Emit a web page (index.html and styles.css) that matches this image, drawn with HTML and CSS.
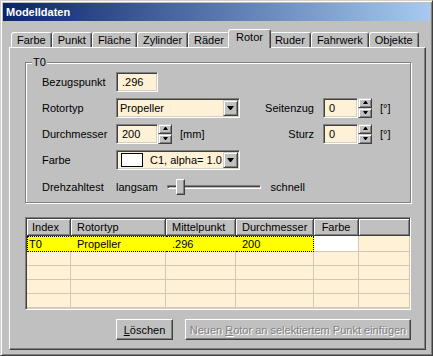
FILE: index.html
```html
<!DOCTYPE html>
<html lang="de">
<head>
    <meta charset="UTF-8">
    <meta name="viewport" content="width=device-width, initial-scale=1.0">
    <title>Modelldaten</title>
    <link rel="stylesheet" href="styles.css">
</head>
<body>
    <div class="window">
        <div class="titlebar">Modelldaten</div>

        <div class="content">
            <div class="tabs">
                <div class="tab">Farbe</div>
                <div class="tab">Punkt</div>
                <div class="tab">Fläche</div>
                <div class="tab">Zylinder</div>
                <div class="tab">Räder</div>
                <div class="tab active">Rotor</div>
                <div class="tab">Ruder</div>
                <div class="tab">Fahrwerk</div>
                <div class="tab">Objekte</div>
            </div>

            <div class="panel">
                <fieldset class="group">
                    <legend>T0</legend>
                    <div class="group-body">
                        <div class="row">
                            <span class="lbl">Bezugspunkt</span>
                            <div class="ctl">
                                <div class="edit edit-mid">.296</div>
                            </div>
                        </div>

                        <div class="row">
                            <span class="lbl">Rotortyp</span>
                            <div class="ctl">
                                <div class="select">
                                    <span class="select-value">Propeller</span>
                                    <span class="select-btn"><i class="arrow-down"></i></span>
                                </div>
                            </div>
                            <span class="side-lbl">Seitenzug</span>
                            <div class="edit edit-small">0</div>
                            <div class="spin">
                                <span class="spin-btn"><i class="arrow-up"></i></span>
                                <span class="spin-btn"><i class="arrow-dn"></i></span>
                            </div>
                            <span class="unit">[°]</span>
                        </div>

                        <div class="row">
                            <span class="lbl">Durchmesser</span>
                            <div class="ctl">
                                <div class="edit edit-mid">200</div>
                                <div class="spin">
                                    <span class="spin-btn"><i class="arrow-up"></i></span>
                                    <span class="spin-btn"><i class="arrow-dn"></i></span>
                                </div>
                                <span class="unit">[mm]</span>
                            </div>
                            <span class="side-lbl">Sturz</span>
                            <div class="edit edit-small">0</div>
                            <div class="spin">
                                <span class="spin-btn"><i class="arrow-up"></i></span>
                                <span class="spin-btn"><i class="arrow-dn"></i></span>
                            </div>
                            <span class="unit">[°]</span>
                        </div>

                        <div class="row">
                            <span class="lbl">Farbe</span>
                            <div class="ctl">
                                <div class="select">
                                    <span class="swatch"></span>
                                    <span class="select-value">C1, alpha= 1.0</span>
                                    <span class="select-btn"><i class="arrow-down"></i></span>
                                </div>
                            </div>
                        </div>

                        <div class="row row-last">
                            <span class="lbl">Drehzahltest</span>
                            <span class="speed">langsam</span>
                            <div class="slider">
                                <span class="track"></span>
                                <span class="thumb"></span>
                            </div>
                            <span class="speed">schnell</span>
                        </div>
                    </div>
                </fieldset>

                <div class="table-wrap">
                    <table class="grid">
                        <colgroup>
                            <col class="c-index">
                            <col class="c-typ">
                            <col class="c-mitte">
                            <col class="c-durch">
                            <col class="c-farbe">
                            <col>
                        </colgroup>
                        <thead>
                            <tr>
                                <th>Index</th>
                                <th>Rotortyp</th>
                                <th>Mittelpunkt</th>
                                <th>Durchmesser</th>
                                <th class="center">Farbe</th>
                                <th></th>
                            </tr>
                        </thead>
                        <tbody>
                            <tr class="first">
                                <td class="sel sel-l">T0</td>
                                <td class="sel">Propeller</td>
                                <td class="sel">.296</td>
                                <td class="sel sel-r">200</td>
                                <td class="white"></td>
                                <td></td>
                            </tr>
                            <tr><td></td><td></td><td></td><td></td><td></td><td></td></tr>
                            <tr><td></td><td></td><td></td><td></td><td></td><td></td></tr>
                            <tr><td></td><td></td><td></td><td></td><td></td><td></td></tr>
                            <tr><td></td><td></td><td></td><td></td><td></td><td></td></tr>
                        </tbody>
                    </table>
                </div>

                <div class="actions">
                    <button class="btn btn-delete"><u>L</u>öschen</button>
                    <button class="btn btn-add" disabled>Neuen <u>R</u>otor an selektiertem Punkt einfügen</button>
                </div>
            </div>
        </div>
    </div>
</body>
</html>
```

FILE: styles.css
```css
body {
    margin: 0;
    font-family: "Liberation Sans", Arial, sans-serif;
    font-size: 11px;
    color: #000;
    background-color: #c0c0c0;
}
.window {
    width: 433px;
    height: 356px;
    box-sizing: border-box;
    padding: 2px;
    background-color: #c0c0c0;
    border: 1px solid;
    border-color: #d4d0c8 #404040 #404040 #d4d0c8;
    box-shadow: inset 1px 1px #fff, inset -1px -1px #808080;
}
.titlebar {
    height: 18px;
    line-height: 18px;
    padding-left: 3px;
    color: #fff;
    font-weight: bold;
    background: linear-gradient(to right, #0a246a, #a6caf0);
}
.content {
    padding: 8px 4px 0 6px;
}

/* tabs */
.tabs {
    display: flex;
    align-items: flex-end;
    height: 18px;
    padding-left: 2px;
    position: relative;
    z-index: 1;
}
.tab {
    height: 14px;
    line-height: 14px;
    padding: 0 5px;
    border: 1px solid;
    border-bottom: none;
    border-color: #fff #404040 transparent #fff;
    box-shadow: inset -1px 0 #808080;
    border-radius: 3px 3px 0 0;
    background-color: #c0c0c0;
}
.tab.active {
    padding: 0 7px 4px;
    margin: 0 -2px -1px;
    position: relative;
}
.panel {
    height: 303px;
    box-sizing: border-box;
    padding: 0 14px 0 15px;
    border: 1px solid;
    border-color: #fff #404040 #404040 #fff;
    box-shadow: inset -1px -1px #808080;
}

/* group box */
.group {
    margin: 8px 0 0;
    padding: 0;
    border: 1px solid #808080;
    box-shadow: inset 1px 1px #fff, 1px 1px #fff;
}
.group legend {
    margin-left: 6px;
    padding: 0 1px;
    line-height: 13px;
    background-color: #c0c0c0;
}
.group-body {
    padding: 2px 0 5px 16px;
}
.row {
    display: flex;
    align-items: center;
    height: 21px;
    margin-bottom: 5px;
}
.row-last {
    margin: 6px 0 0;
}
.lbl {
    width: 74px;
}
.ctl {
    width: 124px;
    display: flex;
    align-items: center;
}
.side-lbl {
    width: 74px;
    margin-right: 9px;
    text-align: right;
}
.unit {
    margin-left: 8px;
}

/* sunken fields */
.edit,
.select {
    height: 20px;
    box-sizing: border-box;
    background-color: #fff1d6;
    border: 1px solid;
    border-color: #808080 #fff #fff #808080;
    box-shadow: inset 1px 1px #404040, inset -1px -1px #d4d0c8;
    line-height: 18px;
}
.edit {
    padding-left: 5px;
}
.edit-mid {
    width: 42px;
}
.edit-small {
    width: 35px;
}
.select {
    width: 124px;
    display: flex;
    align-items: center;
    padding: 0 1px 0 3px;
}
.select-value {
    flex: 1;
    min-width: 0;
    white-space: nowrap;
}
.select-btn {
    flex-shrink: 0;
    margin-left: auto;
    width: 15px;
    height: 16px;
    box-sizing: border-box;
    display: flex;
    align-items: center;
    justify-content: center;
    background-color: #c0c0c0;
    border: 1px solid;
    border-color: #d4d0c8 #404040 #404040 #d4d0c8;
    box-shadow: inset 1px 1px #fff, inset -1px -1px #808080;
}
.arrow-down {
    width: 1px;
    border-top: 4px solid #000;
    border-left: 3px solid transparent;
    border-right: 3px solid transparent;
}
.swatch {
    flex-shrink: 0;
    width: 22px;
    height: 14px;
    box-sizing: border-box;
    border: 1px solid #000;
    background-color: #fff;
    margin: 0 7px 0 1px;
}

/* spinner */
.spin {
    display: flex;
    flex-direction: column;
    width: 14px;
    height: 20px;
}
.spin-btn {
    flex: 1;
    display: flex;
    align-items: center;
    justify-content: center;
    box-sizing: border-box;
    background-color: #c0c0c0;
    border: 1px solid;
    border-color: #d4d0c8 #404040 #404040 #d4d0c8;
    box-shadow: inset 1px 1px #fff, inset -1px -1px #808080;
}
.arrow-up {
    width: 1px;
    border-bottom: 3px solid #000;
    border-left: 2px solid transparent;
    border-right: 2px solid transparent;
}
.arrow-dn {
    width: 1px;
    border-top: 3px solid #000;
    border-left: 2px solid transparent;
    border-right: 2px solid transparent;
}

/* slider */
.slider {
    position: relative;
    width: 94px;
    height: 21px;
    margin: 0 10px 0 9px;
}
.track {
    position: absolute;
    left: 0;
    right: 0;
    top: 9px;
    height: 4px;
    box-sizing: border-box;
    border: 1px solid;
    border-color: #808080 #fff #fff #808080;
    box-shadow: inset 1px 1px #404040;
}
.thumb {
    position: absolute;
    left: 9px;
    top: 3px;
    width: 9px;
    height: 16px;
    box-sizing: border-box;
    background-color: #c0c0c0;
    border: 1px solid;
    border-color: #fff #404040 #404040 #fff;
    box-shadow: inset -1px -1px #808080;
}

/* table */
.table-wrap {
    margin-top: 14px;
    height: 93px;
    box-sizing: border-box;
    overflow: hidden;
    background-color: #fff1d6;
    border: 1px solid;
    border-color: #808080 #fff #fff #808080;
    box-shadow: inset 1px 1px #404040, inset -1px -1px #d4d0c8;
    padding: 1px 0 0 1px;
}
.grid {
    width: 100%;
    table-layout: fixed;
    border-collapse: separate;
    border-spacing: 0;
}
.c-index { width: 44px; }
.c-typ { width: 95px; }
.c-mitte { width: 70px; }
.c-durch { width: 78px; }
.c-farbe { width: 45px; }
.grid th {
    height: 16px;
    padding: 0 0 0 6px;
    font-weight: normal;
    text-align: left;
    white-space: nowrap;
    overflow: hidden;
    background-color: #c0c0c0;
    border-right: 1px solid #404040;
    border-bottom: 1px solid #404040;
    box-shadow: inset 1px 1px #fff, inset -1px -1px #808080;
}
.grid th:first-child {
    padding-left: 5px;
}
.grid th.center {
    text-align: center;
    padding: 0;
}
.grid td {
    height: 13px;
    line-height: 13px;
    padding: 0 0 0 6px;
    white-space: nowrap;
    border-right: 1px solid #d0c7b5;
    border-bottom: 1px solid #d0c7b5;
}
.grid td:first-child {
    padding-left: 2px;
}
.grid tr.first td {
    height: 14px;
}
.grid td.sel {
    background-color: #ffff00;
    border-top: 1px dotted #000;
    border-bottom: 1px dotted #000;
    border-right-color: #ffff00;
}
.grid td.sel-l {
    border-left: 1px dotted #000;
    padding-left: 1px;
}
.grid td.sel-r {
    border-right: 1px dotted #000;
}
.grid td.white {
    background-color: #fff;
}

/* buttons */
.actions {
    display: flex;
    justify-content: flex-end;
    gap: 12px;
    margin-top: 9px;
}
.btn {
    height: 21px;
    box-sizing: border-box;
    padding: 0;
    font: inherit;
    color: #000;
    background-color: #c0c0c0;
    border: 1px solid;
    border-color: #fff #404040 #404040 #fff;
    box-shadow: inset -1px -1px #808080;
}
.btn-delete {
    width: 57px;
}
.btn-add {
    width: 226px;
}
.btn:disabled {
    color: #808080;
    text-shadow: 1px 1px #fff;
}
```
